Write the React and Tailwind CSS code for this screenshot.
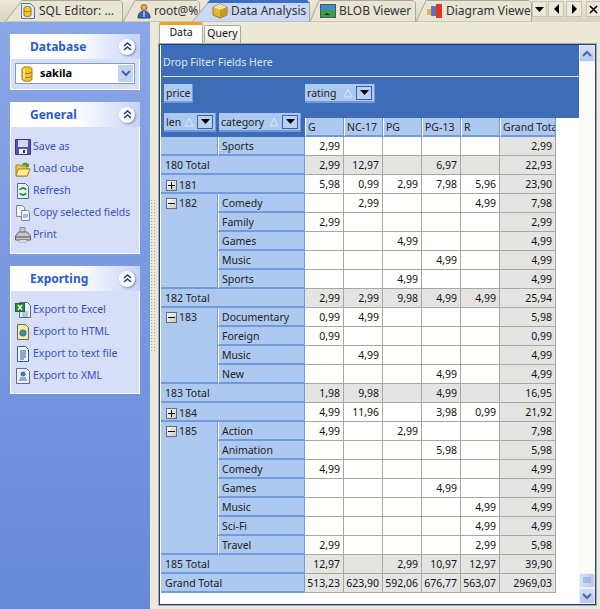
import React from "react";

// --- small pixel style icons ---
const Db = () => (
  <svg width="12" height="16" viewBox="0 0 12 16">
    <path d="M1 3c0-3 10-3 10 0v10c0 3-10 3-10 0z" fill="#f4c430" stroke="#a07808" />
    <path d="M1 6c2 2 8 2 10 0M1 10c2 2 8 2 10 0" fill="none" stroke="#a07808" />
    <path d="M3 3v10" stroke="#fff3b0" strokeWidth="1.5" />
  </svg>
);

const SqlDoc = () => (
  <svg width="14" height="16" viewBox="0 0 14 16">
    <path d="M0.5 0.5h9l4 4v11H0.5z" fill="#dce8fa" stroke="#5a78b8" />
    <path d="M3 5c0-2 7-2 7 0v7c0 2-7 2-7 0z" fill="#f4c430" stroke="#a07808" />
    <path d="M3 8c1.5 1 5.5 1 7 0" fill="none" stroke="#a07808" />
  </svg>
);

const Person = () => (
  <svg width="14" height="16" viewBox="0 0 14 16">
    <circle cx="7" cy="4.5" r="3" fill="#e8a850" stroke="#a86a20" />
    <path d="M1 15c0-5 3-7 6-7s6 2 6 7z" fill="#3563b8" stroke="#1e3f80" />
    <path d="M7 8v6" stroke="#fff" />
  </svg>
);

const Cube = () => (
  <svg width="16" height="16" viewBox="0 0 16 16">
    <path d="M8 1l7 3v8l-7 3-7-3V4z" fill="#e2b43c" stroke="#9a7414" />
    <path d="M1 4l7 3 7-3-7-3z" fill="#f8e49a" />
    <path d="M8 7v8l7-3V4z" fill="#c8962a" />
  </svg>
);

const Picture = () => (
  <svg width="16" height="16" viewBox="0 0 16 16">
    <rect x="0.5" y="1.5" width="15" height="13" fill="#3a8ed8" stroke="#555" />
    <path d="M1 9l5-4 4 3 5-2v8H1z" fill="#3aa040" />
    <path d="M4 12l3-2 3 2z" fill="#123" />
  </svg>
);

const Diagram = () => (
  <svg width="16" height="16" viewBox="0 0 16 16">
    <rect x="0" y="6" width="5" height="6" fill="#e8b048" />
    <rect x="4" y="3" width="5" height="10" fill="#6070c8" />
    <rect x="9" y="1" width="6" height="14" fill="#e03818" />
  </svg>
);

const Floppy = () => (
  <svg width="16" height="16" viewBox="0 0 16 16">
    <path d="M0.5 0.5h15v15h-15z" fill="#4f55b4" stroke="#34388a" />
    <rect x="3" y="1" width="10" height="7" fill="#d4d8f0" />
    <rect x="4" y="10" width="8" height="5" fill="#f4f4f4" />
    <rect x="8" y="11" width="2" height="3" fill="#333" />
  </svg>
);

const Folder = () => (
  <svg width="16" height="16" viewBox="0 0 16 16">
    <path d="M1 15V4h5l1 1h5v3h3l-3 7z" fill="#f0c840" stroke="#a88418" />
    <path d="M3 8h12l-3 7H1z" fill="#fcec9c" stroke="#a88418" />
    <path d="M7 3c2-2 4-2 6 0l1-1v4h-4l1-1c-1-1-2-1-3 0z" fill="#48a038" />
  </svg>
);

const RefreshDoc = () => (
  <svg width="16" height="16" viewBox="0 0 16 16">
    <path d="M2.5 0.5h8l3 3v12h-11z" fill="#e8effa" stroke="#4a6a9a" />
    <path d="M5 7a3.2 3.2 0 0 1 6 0M11 10a3.2 3.2 0 0 1-6 0" fill="none" stroke="#2a9038" strokeWidth="2" />
  </svg>
);

const CopyDoc = () => (
  <svg width="16" height="16" viewBox="0 0 16 16">
    <path d="M1.5 0.5h6l2 2v9h-8z" fill="#f4f6fb" stroke="#7a869a" />
    <path d="M6.5 5.5h6l2 2v8h-8z" fill="#f4f6fb" stroke="#7a869a" />
    <path d="M8 9h5v4H8z" fill="#9cc0ec" />
  </svg>
);

const Printer = () => (
  <svg width="16" height="16" viewBox="0 0 16 16">
    <path d="M5 0.5h5v5H5z" fill="#b8c8ec" stroke="#8090b0" />
    <path d="M0.5 9l3-4h9l3 4v4h-15z" fill="#c4c4c4" stroke="#666" />
    <path d="M1 9h14v2H1z" fill="#8a8a8a" />
    <path d="M4 13h8v2H4z" fill="#fff" stroke="#777" strokeWidth="0.5" />
  </svg>
);

const Excel = () => (
  <svg width="16" height="16" viewBox="0 0 16 16">
    <path d="M4.5 0.5h8l3 3v12h-11z" fill="#eef2fa" stroke="#5a6a8a" />
    <path d="M7 10h6M7 12h6M7 14h6" stroke="#8098c0" />
    <rect x="0.5" y="1.5" width="9" height="8" fill="#2a8a38" stroke="#1c6a28" />
    <path d="M3 3l4 5M7 3L3 8" stroke="#fff" strokeWidth="1.4" />
  </svg>
);

const Html = () => (
  <svg width="16" height="16" viewBox="0 0 16 16">
    <path d="M2.5 0.5h8l3 3v12h-11z" fill="#fbee9a" stroke="#6a6a50" />
    <circle cx="8" cy="9" r="3.5" fill="#3a78c8" />
    <path d="M6 7l3 0 0 3-2 1z" fill="#48a038" />
  </svg>
);

const TextDoc = () => (
  <svg width="16" height="16" viewBox="0 0 16 16">
    <path d="M2.5 0.5h8l3 3v12h-11z" fill="#f4f7fc" stroke="#3a5a8a" />
    <path d="M5 5h6M5 7h6M5 9h6M5 11h6M5 13h4" stroke="#2a50a0" />
  </svg>
);

const Xml = () => (
  <svg width="16" height="16" viewBox="0 0 16 16">
    <path d="M1.5 0.5h10l3 3v12h-13z" fill="#eef3fb" stroke="#5a6a8a" />
    <circle cx="8" cy="6" r="2.5" fill="#3a78c8" />
    <path d="M5 10h6M4 12h8" stroke="#4060b0" />
  </svg>
);

const Chevrons = () => (
  <svg width="9" height="9" viewBox="0 0 9 9">
    <path d="M1 4l3.5-3L8 4M1 8l3.5-3L8 8" fill="none" stroke="#1c3f94" strokeWidth="1.6" />
  </svg>
);

const Chevron = ({ up = false, color = "#4a6498" }) => (
  <svg width="10" height="7" viewBox="0 0 10 7">
    <path d={up ? "M1 6l4-4 4 4" : "M1 1l4 4 4-4"} fill="none" stroke={color} strokeWidth="2" />
  </svg>
);

const Tri = ({ dir }) => {
  const d = { down: "M0 0h9L4.5 5z", left: "M5 0v10L0 5z", right: "M0 0v10l5-5z" }[dir];
  const size = dir === "down" ? "w-[9px] h-[5px]" : "w-[5px] h-[10px]";
  const box = dir === "down" ? "0 0 9 5" : "0 0 5 10";
  return (
    <svg className={size} viewBox={box}>
      <path d={d} fill="#000" />
    </svg>
  );
};

// --- top tabs ---
const Tab = ({ icon, label, active, w, slant, className, gap, labelClass = "" }) => (
  <div className={`relative h-[22px] shrink-0 flex items-center ${className} ${active ? "z-10" : ""}`}>
    <svg className="absolute inset-0 w-full h-full" viewBox={`0 0 ${w} 22`}>
      <path
        d={`M0 22L${slant} 0.5H${w - 3}l2.5 2.5V22z`}
        fill={active ? "#c9d9f5" : "#e8e5d4"}
        stroke="#aca899"
      />
      {active && <path d={`M${slant - 3} 3L${slant} 0H${w - 3}l3 3z`} fill="#3c6ec4" />}
    </svg>
    <div className={`relative flex items-center ${gap}`}>
      {icon}
      <span className={`text-[12px] text-[#333] whitespace-nowrap ${labelClass}`}>{label}</span>
    </div>
  </div>
);

const BarButton = ({ children, className = "" }) => (
  <div className={`h-[16px] flex items-center justify-center border border-[#c8c4b0] bg-[#ece9d8] ${className}`}>
    {children}
  </div>
);

// --- sidebar ---
const Panel = ({ title, children }) => (
  <div className="border border-white border-t-0 bg-[#d6dff7] mb-[12px] last:mb-0">
    <div className="h-[25px] flex items-center justify-between pl-[20px] pr-[5px] bg-gradient-to-r from-white from-50% to-[#c6d3f7] -mx-px">
      <span className="text-[12px] font-bold text-[#2a5bd0]">{title}</span>
      <span className="w-[16px] h-[16px] rounded-full bg-white flex items-center justify-center shadow-[1px_1px_2px_#7a8ac0]">
        <Chevrons />
      </span>
    </div>
    {children}
  </div>
);

const ActionItem = ({ icon, label }) => (
  <div className="h-[22px] flex items-center gap-[2px] pl-[4px]">
    <span className="w-[16px] h-[16px] flex items-center justify-center">{icon}</span>
    <span className="text-[10.5px] text-[#3a50c0] whitespace-nowrap">{label}</span>
  </div>
);

// --- pivot ---
const FieldButton = ({ label, width, sortable = true }) => (
  <div className={`h-[19px] flex items-center bg-[#adc9ef] border-b-2 border-r border-[#7199dc] pl-[2px] pr-[2px] ${width}`}>
    <span className="text-[10.5px] text-[#222] pt-[2px]">{label}</span>
    {sortable && (
      <>
        <svg className="ml-auto" width="10" height="10" viewBox="0 0 10 10">
          <path d="M5 1l4 8H1z" fill="none" stroke="#dbe6f8" />
        </svg>
        <span className="ml-[3px] w-[16px] h-[14px] bg-[#b8d0f2] border border-[#3b5fa8] flex items-center justify-center">
          <Tri dir="down" />
        </span>
      </>
    )}
  </div>
);

const blank = "";
const rows = [
  { cat: "Sports", hide: true, v: ["2,99", blank, blank, blank, blank, "2,99"] },
  { total: "180 Total", v: ["2,99", "12,97", blank, "6,97", blank, "22,93"] },
  { len: "181", collapsed: true, v: ["5,98", "0,99", "2,99", "7,98", "5,96", "23,90"] },
  { len: "182", span: 5, cat: "Comedy", v: [blank, "2,99", blank, blank, "4,99", "7,98"] },
  { cat: "Family", v: ["2,99", blank, blank, blank, blank, "2,99"] },
  { cat: "Games", v: [blank, blank, "4,99", blank, blank, "4,99"] },
  { cat: "Music", v: [blank, blank, blank, "4,99", blank, "4,99"] },
  { cat: "Sports", v: [blank, blank, "4,99", blank, blank, "4,99"] },
  { total: "182 Total", v: ["2,99", "2,99", "9,98", "4,99", "4,99", "25,94"] },
  { len: "183", span: 4, cat: "Documentary", v: ["0,99", "4,99", blank, blank, blank, "5,98"] },
  { cat: "Foreign", v: ["0,99", blank, blank, blank, blank, "0,99"] },
  { cat: "Music", v: [blank, "4,99", blank, blank, blank, "4,99"] },
  { cat: "New", v: [blank, blank, blank, "4,99", blank, "4,99"] },
  { total: "183 Total", v: ["1,98", "9,98", blank, "4,99", blank, "16,95"] },
  { len: "184", collapsed: true, v: ["4,99", "11,96", blank, "3,98", "0,99", "21,92"] },
  { len: "185", span: 7, cat: "Action", v: ["4,99", blank, "2,99", blank, blank, "7,98"] },
  { cat: "Animation", v: [blank, blank, blank, "5,98", blank, "5,98"] },
  { cat: "Comedy", v: ["4,99", blank, blank, blank, blank, "4,99"] },
  { cat: "Games", v: [blank, blank, blank, "4,99", blank, "4,99"] },
  { cat: "Music", v: [blank, blank, blank, blank, "4,99", "4,99"] },
  { cat: "Sci-Fi", v: [blank, blank, blank, blank, "4,99", "4,99"] },
  { cat: "Travel", v: ["2,99", blank, blank, blank, "2,99", "5,98"] },
  { total: "185 Total", v: ["12,97", blank, "2,99", "10,97", "12,97", "39,90"] },
  { total: "Grand Total", v: ["513,23", "623,90", "592,06", "676,77", "563,07", "2969,03"] },
];

const headCell =
  "bg-[#adc9ef] border-b-2 border-r border-[#7199dc] text-[10.5px] leading-[13px] text-[#222] text-left align-middle p-0 pt-[2px] font-normal";

const Expander = ({ open }) => (
  <span className="w-[11px] h-[11px] mr-[2px] border border-[#6a6a6a] bg-gradient-to-br from-white to-[#c8c8c8] flex items-center justify-center shrink-0">
    <svg width="7" height="7" viewBox="0 0 7 7">
      <path d={open ? "M0 3.5h7" : "M0 3.5h7M3.5 0v7"} stroke="#000" />
    </svg>
  </span>
);

const LenCell = ({ row }) => (
  <div className="flex items-center pl-[5px] h-[13px] mt-px">
    <Expander open={!row.collapsed} />
    {row.len}
  </div>
);

const PivotRow = ({ row }) => (
  <tr className="h-[19px]">
    {row.total && (
      <th colSpan={2} className={`${headCell} pl-[4px]`}>{row.total}</th>
    )}
    {row.collapsed && (
      <th colSpan={2} className={headCell}><LenCell row={row} /></th>
    )}
    {row.hide && <th className={headCell}></th>}
    {row.span && (
      <th rowSpan={row.span} className={`${headCell} align-top`}><LenCell row={row} /></th>
    )}
    {row.cat && (
      <th className={`${headCell} pl-[3px] border-l border-l-white`}>{row.cat}</th>
    )}
    {row.v.map((val, i) => (
      <td
        key={i}
        className={`border-b border-r border-[#aca899] text-right pr-[3px] py-0 pl-0 text-[10.5px] text-[#111] leading-none ${
          row.total || i === 5 ? "bg-[#e4e4e4]" : "bg-white"
        }`}
      >
        {val}
      </td>
    ))}
  </tr>
);

const columns = ["G", "NC-17", "PG", "PG-13", "R", "Grand Total"];

export default function App() {
  return (
    <div className="w-[600px] h-[609px] overflow-hidden flex flex-col bg-[#ece9d8] font-['Noto_Sans',Tahoma,sans-serif]">
      {/* document tabs */}
      <div className="h-[22px] flex items-start bg-gradient-to-b from-[#ece9d8] to-[#d8d4c0] pl-[5px] shrink-0">
        <Tab w={118} slant={17} className="w-[118px] pl-[16px]" gap="gap-[4px]" icon={<SqlDoc />} label="SQL Editor: ..." />
        <Tab w={77} slant={12} className="w-[77px] pl-[14px]" gap="gap-[3px]" icon={<Person />} label="root@%" />
        <Tab w={118} slant={18} active className="w-[118px] -ml-[8px] pl-[20px]" gap="gap-[3px]" icon={<Cube />} label="Data Analysis" />
        <Tab w={106} slant={9} className="w-[106px] pl-[10px]" gap="gap-[3px]" icon={<Picture />} label="BLOB Viewer" />
        <Tab w={116} slant={10} className="w-[116px] pl-[11px] overflow-hidden" gap="gap-[3px]" icon={<Diagram />} label="Diagram Viewer" labelClass="w-[85px] overflow-hidden" />
        <div className="mt-[1px] flex items-center shrink-0">
          <BarButton className="w-[15px]"><Tri dir="down" /></BarButton>
          <BarButton className="w-[16px] ml-px"><Tri dir="left" /></BarButton>
          <BarButton className="w-[16px] ml-[2px]"><Tri dir="right" /></BarButton>
          <BarButton className="w-[15px] ml-[4px]">
            <svg width="9" height="9" viewBox="0 0 9 9">
              <path d="M1 1l7 7M8 1L1 8" stroke="#000" strokeWidth="1.6" />
            </svg>
          </BarButton>
        </div>
      </div>

      <div className="flex-1 flex min-h-0">
        {/* sidebar */}
        <div className="w-[150px] shrink-0 bg-gradient-to-b from-[#8aa6e6] to-[#6889da] px-[10px] pt-[12px]">
          <Panel title="Database">
            <div className="px-[4px] pt-[4px] pb-[5px]">
              <div className="h-[21px] bg-white border border-[#7f9db9] flex items-center pl-[5px] pr-px">
                <Db />
                <span className="ml-[7px] text-[11px] font-bold text-black flex-1">sakila</span>
                <span className="w-[15px] h-[17px] bg-[#c2d2f2] flex items-center justify-center">
                  <Chevron />
                </span>
              </div>
            </div>
          </Panel>
          <Panel title="General">
            <div className="pt-[9px] pb-[7px]">
              <ActionItem icon={<Floppy />} label="Save as" />
              <ActionItem icon={<Folder />} label="Load cube" />
              <ActionItem icon={<RefreshDoc />} label="Refresh" />
              <ActionItem icon={<CopyDoc />} label="Copy selected fields" />
              <ActionItem icon={<Printer />} label="Print" />
            </div>
          </Panel>
          <Panel title="Exporting">
            <div className="pt-[8px] pb-[6px]">
              <ActionItem icon={<Excel />} label="Export to Excel" />
              <ActionItem icon={<Html />} label="Export to HTML" />
              <ActionItem icon={<TextDoc />} label="Export to text file" />
              <ActionItem icon={<Xml />} label="Export to XML" />
            </div>
          </Panel>
        </div>

        {/* splitter */}
        <div className="w-[8px] shrink-0 flex flex-col items-start justify-center">
          <div className="w-[6px] h-[154px] mb-[80px] bg-[radial-gradient(#a8a490_1px,transparent_1px)] bg-[length:3px_3px]" />
        </div>

        {/* main */}
        <div className="w-[439px] shrink-0 flex flex-col pb-[3px]">
          <div className="h-[21px] flex items-end pl-px shrink-0">
            <div className="w-[44px] h-[21px] bg-white border-t-[3px] border-t-[#f0a020] border-x border-x-[#aca899] text-[10.5px] text-[#111] text-center rounded-t-[2px]">
              Data
            </div>
            <div className="w-[37px] h-[18px] ml-px bg-gradient-to-b from-white to-[#ece9d8] border-t border-x border-[#aca899] text-[10.5px] text-[#111] text-center rounded-t-[2px]">
              Query
            </div>
          </div>
          <div className="flex-1 min-h-0 border border-[#aca899] bg-white">
            <div className="h-full border border-[#1c3f94] flex">
              <div className="flex-1 min-w-0 pl-px flex flex-col">
                <div className="h-[31px] bg-[#3e6db8] pl-[2px] pt-[5px] flex items-center shrink-0">
                  <span className="text-[10.5px] text-[#dce6f7]">Drop Filter Fields Here</span>
                </div>
                <div className="bg-[#3e6db8] pl-[2px] shrink-0">
                  <div className="h-px bg-[#e6e2d2]" />
                </div>

                {/* fields + column headers */}
                <div className="flex shrink-0">
                  <div className="w-[144px] h-[60px] bg-[#3e6db8] shrink-0 pl-[3px] pt-[7px]">
                    <FieldButton label="price" width="w-[29px]" sortable={false} />
                    <div className="flex gap-[3px] mt-[10px]">
                      <FieldButton label="len" width="w-[52px]" />
                      <FieldButton label="category" width="w-[82px]" />
                    </div>
                  </div>
                  <div className="flex-1 flex flex-col">
                    <div className="h-[41px] bg-[#3e6db8] pt-[7px]">
                      <FieldButton label="rating" width="w-[70px]" />
                    </div>
                    <div className="h-[19px] flex">
                      {columns.map((c, i) => (
                        <div
                          key={c}
                          className={`h-[19px] pl-[2px] pt-[3px] leading-[13px] bg-[#adc9ef] border-b-2 border-r border-[#7199dc] border-l border-l-white text-[10.5px] text-[#222] whitespace-nowrap overflow-hidden ${
                            i === 5 ? "w-[56px]" : "w-[39px]"
                          }`}
                        >
                          {c}
                        </div>
                      ))}
                    </div>
                  </div>
                </div>

                <table className="w-[395px] table-fixed border-separate border-spacing-0 shrink-0">
                  <colgroup>
                    <col className="w-[57px]" />
                    <col className="w-[87px]" />
                    <col className="w-[39px]" />
                    <col className="w-[39px]" />
                    <col className="w-[39px]" />
                    <col className="w-[39px]" />
                    <col className="w-[39px]" />
                    <col className="w-[56px]" />
                  </colgroup>
                  <tbody>
                    {rows.map((r, i) => (
                      <PivotRow key={i} row={r} />
                    ))}
                  </tbody>
                </table>
              </div>

              {/* scroll bar */}
              <div className="w-[16px] shrink-0 bg-[#fbfbf8] flex flex-col items-center">
                <div className="w-[16px] h-[17px] bg-gradient-to-b from-[#d4e0f8] to-[#b4c8ee] border border-[#e8eefb] flex items-center justify-center rounded-[2px]">
                  <Chevron up />
                </div>
                <div className="flex-1" />
                <div className="w-[16px] h-[15px] bg-gradient-to-r from-[#d4e0f8] to-[#b4c8ee] border border-[#e8eefb] flex items-center justify-center rounded-[2px]">
                  <svg width="8" height="7" viewBox="0 0 8 7">
                    <path d="M0 1h8M0 3h8M0 5h8" stroke="#8aa0cc" />
                  </svg>
                </div>
                <div className="w-[16px] h-[16px] bg-gradient-to-b from-[#d4e0f8] to-[#b4c8ee] border border-[#e8eefb] flex items-center justify-center rounded-[2px]">
                  <Chevron />
                </div>
              </div>
            </div>
          </div>
        </div>
      </div>
    </div>
  );
}
